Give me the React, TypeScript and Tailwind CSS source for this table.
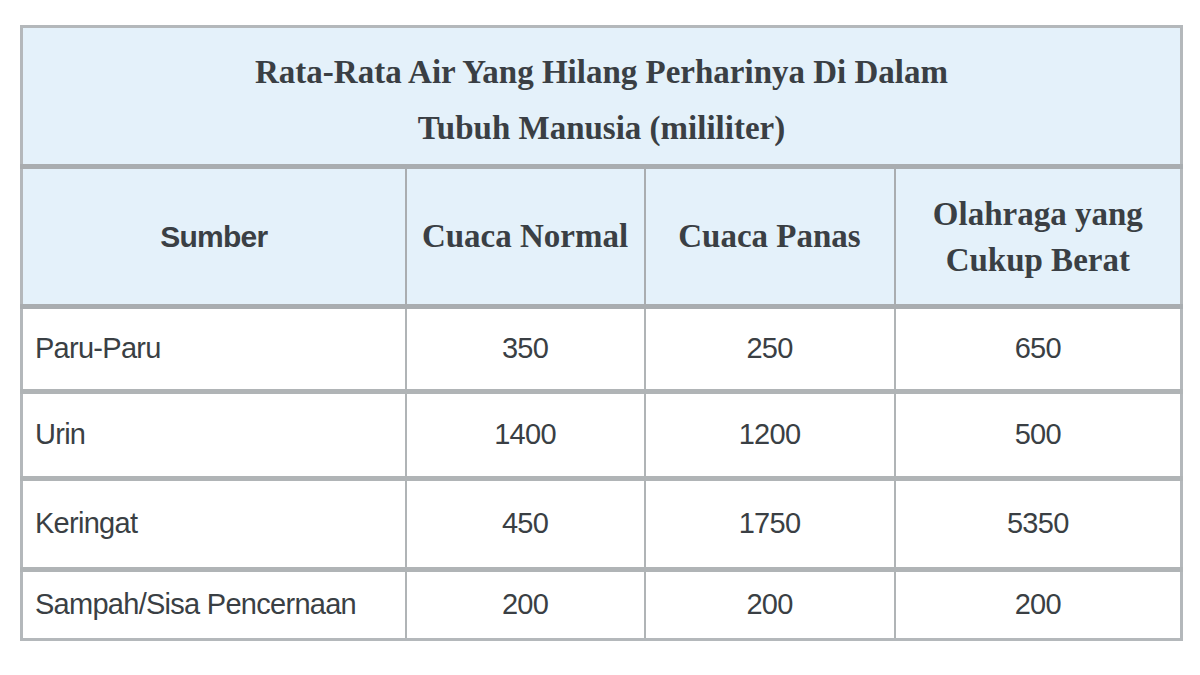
const rows = [
  { name: 'Paru-Paru', normal: '350', panas: '250', berat: '650', h: 'h-[85px]' },
  { name: 'Urin', normal: '1400', panas: '1200', berat: '500', h: 'h-[87px]' },
  { name: 'Keringat', normal: '450', panas: '1750', berat: '5350', h: 'h-[91px]' },
  { name: 'Sampah/Sisa Pencernaan', normal: '200', panas: '200', berat: '200', h: 'h-[70px]' },
];

const serif = "font-['Liberation_Serif',serif]";
const sans = "font-['Liberation_Sans',sans-serif]";

export default function App() {
  return (
    <div className="w-[1200px] h-[675px] bg-white pt-[25px] pl-[20px]">
      <table className="w-[1160px] table-fixed border-collapse border-[3px] border-[#b4b8bb] text-[#3a3f44]">
        <colgroup>
          <col className="w-[384px]" />
          <col className="w-[239px]" />
          <col className="w-[250px]" />
          <col className="w-[287px]" />
        </colgroup>
        <thead>
          <tr className="h-[140px] bg-[#e4f1fa]">
            <th colSpan={4} className={`${serif} border-b-[5px] border-[#a9adb0] text-[33px] font-bold leading-[56px] text-center pt-2`}>
              Rata-Rata Air Yang Hilang Perharinya Di Dalam
              <br />
              Tubuh Manusia (mililiter)
            </th>
          </tr>
          <tr className="h-[140px] bg-[#e4f1fa]">
            <th className={`${sans} border-b-[5px] border-r-2 border-[#a9adb0] text-[30px] font-bold tracking-tight`}>Sumber</th>
            <th className={`${serif} border-b-[5px] border-r-2 border-[#a9adb0] text-[33px] font-bold`}>Cuaca Normal</th>
            <th className={`${serif} border-b-[5px] border-r-2 border-[#a9adb0] text-[33px] font-bold`}>Cuaca Panas</th>
            <th className={`${serif} border-b-[5px] border-[#a9adb0] text-[33px] font-bold leading-[46px]`}>
              Olahraga yang
              <br />
              Cukup Berat
            </th>
          </tr>
        </thead>
        <tbody>
          {rows.map((r, i) => (
            <tr key={r.name} className={r.h}>
              <td className={`${sans} ${i < rows.length - 1 ? 'border-b-[5px]' : ''} border-r-2 border-[#b0b4b6] pl-[12px] text-[29px] tracking-tight`}>
                {r.name}
              </td>
              <td className={`${sans} ${i < rows.length - 1 ? 'border-b-[5px]' : ''} border-r-2 border-[#b0b4b6] text-center text-[29px] tracking-tight`}>
                {r.normal}
              </td>
              <td className={`${sans} ${i < rows.length - 1 ? 'border-b-[5px]' : ''} border-r-2 border-[#b0b4b6] text-center text-[29px] tracking-tight`}>
                {r.panas}
              </td>
              <td className={`${sans} ${i < rows.length - 1 ? 'border-b-[5px]' : ''} border-[#b0b4b6] text-center text-[29px] tracking-tight`}>
                {r.berat}
              </td>
            </tr>
          ))}
        </tbody>
      </table>
    </div>
  );
}
